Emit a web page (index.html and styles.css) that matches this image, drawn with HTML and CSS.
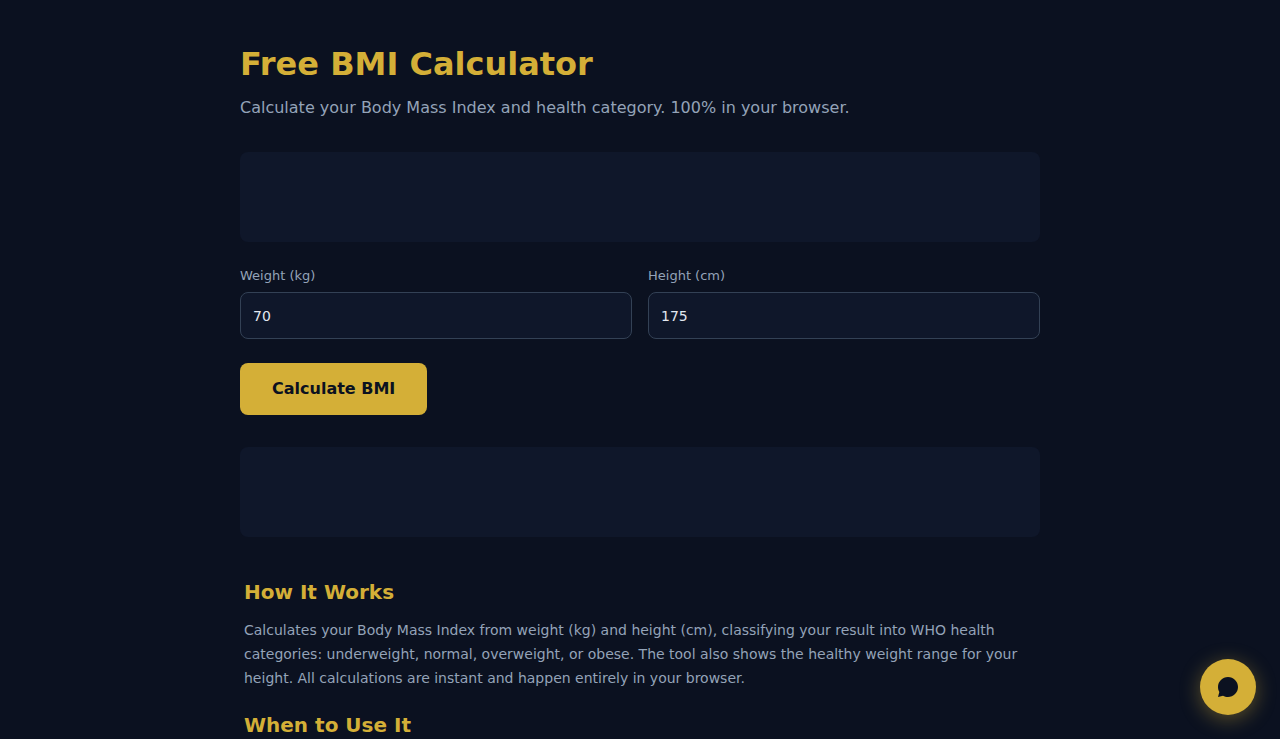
FILE: index.html
```html
<!DOCTYPE html>
<html lang="en">
<head>
    <meta charset="UTF-8">
    <meta name="viewport" content="width=device-width, initial-scale=1.0">
    <title>Free BMI Calculator</title>
    <link rel="stylesheet" href="styles.css">
</head>
<body>
    <main class="container">
        <h1>Free BMI Calculator</h1>
        <p class="subtitle">Calculate your Body Mass Index and health category. 100% in your browser.</p>

        <div class="ad-slot"></div>

        <form id="bmiForm">
            <div class="fields">
                <div class="field">
                    <label for="weight">Weight (kg)</label>
                    <input type="number" id="weight" value="70">
                </div>
                <div class="field">
                    <label for="height">Height (cm)</label>
                    <input type="number" id="height" value="175">
                </div>
            </div>
            <button type="submit" class="btn">Calculate BMI</button>
        </form>
        <div id="result"></div>

        <div class="ad-slot"></div>

        <section class="info">
            <h2>How It Works</h2>
            <p>Calculates your Body Mass Index from weight (kg) and height (cm), classifying your result into WHO health categories: underweight, normal, overweight, or obese. The tool also shows the healthy weight range for your height. All calculations are instant and happen entirely in your browser.</p>
            <h2>When to Use It</h2>
        </section>
    </main>

    <button type="button" class="chat-btn" aria-label="Open chat">
        <svg width="24" height="24" viewBox="0 0 24 24" fill="currentColor">
            <path d="M12 2C6.48 2 2 6.48 2 12c0 1.82.49 3.53 1.34 5L2 22l5-1.34C8.47 21.51 10.18 22 12 22c5.52 0 10-4.48 10-10S17.52 2 12 2z"/>
        </svg>
    </button>

    <script>
        document.getElementById("bmiForm").addEventListener("submit", function(event) {
            event.preventDefault();
            const weight = parseFloat(document.getElementById("weight").value);
            const height = parseFloat(document.getElementById("height").value) / 100;
            const result = document.getElementById("result");
            if (!weight || !height) {
                result.textContent = "";
                return;
            }
            const bmi = weight / (height * height);
            const category = bmi < 18.5 ? "Underweight" : bmi < 25 ? "Normal" : bmi < 30 ? "Overweight" : "Obese";
            result.textContent = "BMI: " + bmi.toFixed(1) + " (" + category + ")";
        });
    </script>
</body>
</html>
```
FILE: styles.css
```css
* {
    box-sizing: border-box;
    margin: 0;
    padding: 0;
}
body {
    font-family: "DejaVu Sans", sans-serif;
    background: #0b1120;
    color: #e2e8f0;
    line-height: 1.5;
}
.container {
    max-width: 832px;
    margin: 0 auto;
    padding: 40px 16px;
}
h1 {
    font-size: 32px;
    color: #d4af37;
    margin-bottom: 8px;
}
.subtitle {
    color: #94a3b8;
    margin-bottom: 32px;
}
.ad-slot {
    min-height: 90px;
    background: #0f172a;
    border-radius: 8px;
}
.fields {
    display: grid;
    grid-template-columns: 1fr 1fr;
    gap: 16px;
    margin: 24px 0;
}
.field label {
    display: block;
    font-size: 13px;
    line-height: 20px;
    color: #94a3b8;
    margin-bottom: 6px;
}
.field input {
    display: block;
    width: 100%;
    height: 47px;
    padding: 0 12px;
    font-family: inherit;
    font-size: 14px;
    color: #e2e8f0;
    background: #0f172a;
    border: 1px solid #334155;
    border-radius: 8px;
}
.btn {
    display: block;
    padding: 16px 32px;
    font-family: inherit;
    font-size: 16px;
    font-weight: bold;
    line-height: 20px;
    color: #0b1120;
    background: #d4af37;
    border: none;
    border-radius: 8px;
    cursor: pointer;
}
#result {
    margin-bottom: 32px;
}
.info {
    margin-top: 40px;
    padding: 0 4px;
}
.info h2 {
    font-size: 20px;
    color: #d4af37;
    margin-bottom: 12px;
}
.info p {
    font-size: 14px;
    line-height: 1.7;
    color: #94a3b8;
    margin-bottom: 20px;
}
.chat-btn {
    position: fixed;
    right: 24px;
    bottom: 24px;
    width: 56px;
    height: 56px;
    display: flex;
    align-items: center;
    justify-content: center;
    color: #0b1120;
    background: #d4af37;
    border: none;
    border-radius: 50%;
    box-shadow: 0 4px 20px rgba(212, 175, 55, 0.4);
    cursor: pointer;
}
```
